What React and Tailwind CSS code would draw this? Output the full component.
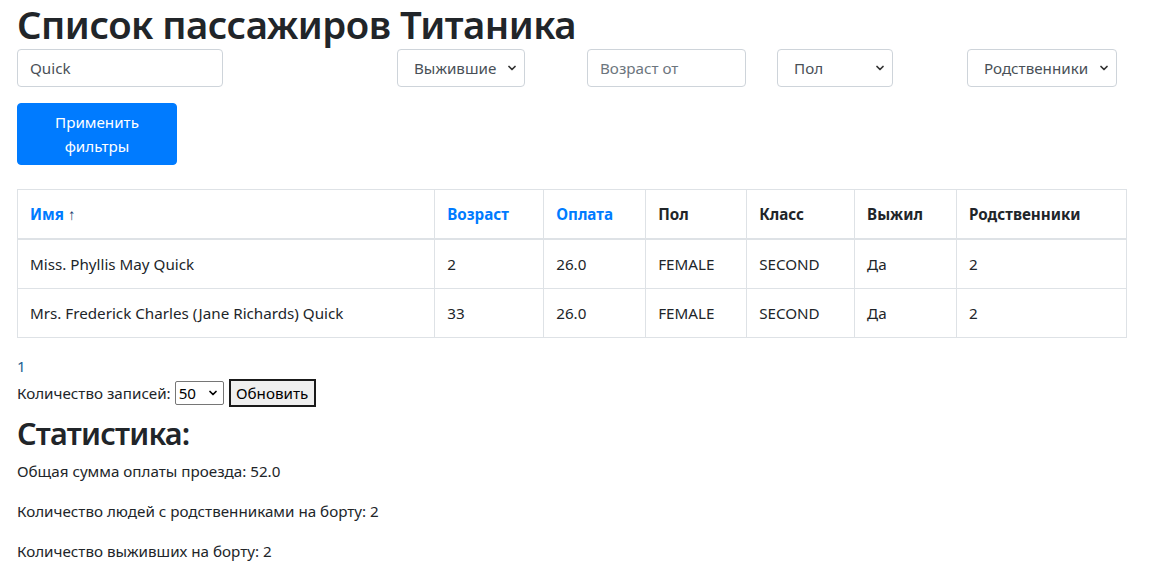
import { ChevronDown } from 'lucide-react';

const rows = [
  { name: 'Miss. Phyllis May Quick', age: '2', fare: '26.0', sex: 'FEMALE', pclass: 'SECOND', survived: 'Да', relatives: '2' },
  { name: 'Mrs. Frederick Charles (Jane Richards) Quick', age: '33', fare: '26.0', sex: 'FEMALE', pclass: 'SECOND', survived: 'Да', relatives: '2' },
];

const headers = [
  { label: 'Имя', sortable: true, arrow: true, width: 'w-[418px]' },
  { label: 'Возраст', sortable: true, width: 'w-[109px]' },
  { label: 'Оплата', sortable: true, width: 'w-[102px]' },
  { label: 'Пол', width: 'w-[101px]' },
  { label: 'Класс', width: 'w-[108px]' },
  { label: 'Выжил', width: 'w-[102px]' },
  { label: 'Родственники', width: 'w-[170px]' },
];

const Select = ({ label, className }) => (
  <div className={`relative ${className}`}>
    <select
      defaultValue=""
      className="h-[38px] w-full appearance-none rounded border border-[#ced4da] bg-white pl-4 pr-5 text-[15.2px] text-[#495057] outline-none"
    >
      <option value="">{label}</option>
    </select>
    <ChevronDown
      size={12}
      strokeWidth={3.5}
      className="pointer-events-none absolute right-[7px] top-[13px] text-[#333]"
    />
  </div>
);

export default function App() {
  return (
    <div className="min-h-[581px] bg-white px-[17px] font-['Noto_Sans',sans-serif] text-[15.2px] leading-6 text-[#212529]">
      <h1 className="h-[48px] text-[38.3px] font-semibold leading-[48px] tracking-[-0.5px]">Список пассажиров Титаника</h1>

      <div className="mt-px flex items-center">
        <input
          defaultValue="Quick"
          className="h-[38px] w-[206px] rounded border border-[#ced4da] px-3 text-[15.2px] text-[#495057] outline-none"
        />
        <Select label="Выжившие" className="ml-[174px] w-[128px]" />
        <input
          placeholder="Возраст от"
          className="ml-[62px] h-[38px] w-[159px] rounded border border-[#ced4da] px-3 text-[15.2px] text-[#495057] outline-none placeholder:text-[#6c757d]"
        />
        <Select label="Пол" className="ml-[31px] w-[116px]" />
        <Select label="Родственники" className="ml-[74px] w-[150px]" />
      </div>

      <button
        type="button"
        className="mt-4 h-[62px] w-[160px] rounded border border-[#007bff] bg-[#007bff] px-3 leading-6 text-white"
      >
        Применить
        <br />
        фильтры
      </button>

      <table className="mt-6 mb-4 w-[1110px] border-collapse border border-[#dee2e6]">
        <thead>
          <tr>
            {headers.map((h) => (
              <th
                key={h.label}
                className={`${h.width} border border-b-2 border-[#dee2e6] p-3 text-left align-bottom font-bold leading-6 ${
                  h.sortable ? 'text-[#007bff]' : 'text-[#212529]'
                }`}
              >
                {h.label}
                {h.arrow && <span className="ml-1 font-normal text-[#1a3d6e]">↑</span>}
              </th>
            ))}
          </tr>
        </thead>
        <tbody>
          {rows.map((r) => (
            <tr key={r.name}>
              {[r.name, r.age, r.fare, r.sex, r.pclass, r.survived, r.relatives].map((v, i) => (
                <td key={i} className="border border-[#dee2e6] p-3 align-top leading-6">
                  {v}
                </td>
              ))}
            </tr>
          ))}
        </tbody>
      </table>

      <div className="text-[#1b6192]">1</div>

      <div className="flex h-[30px] items-center">
        <span>Количество записей:</span>
        <div className="relative ml-[4px]">
          <select
            defaultValue="50"
            className="h-[24px] w-[49px] appearance-none rounded-[2px] border border-[#767676] bg-white pl-[3px] text-[15.2px] leading-5 text-black outline-none"
          >
            <option value="10">10</option>
            <option value="50">50</option>
            <option value="100">100</option>
          </select>
          <ChevronDown
            size={12}
            strokeWidth={3.5}
            className="pointer-events-none absolute right-[5px] top-[6px] text-black"
          />
        </div>
        <button
          type="button"
          className="ml-[5px] h-[28px] w-[87px] border-2 border-[#1a1a1a] bg-[#efefef] text-[15.2px] leading-5 text-black"
        >
          Обновить
        </button>
      </div>

      <h2 className="mt-[6px] mb-[7px] text-[30.6px] font-semibold leading-[38px] tracking-[-0.8px]">Статистика:</h2>
      <p className="mb-4">Общая сумма оплаты проезда: 52.0</p>
      <p className="mb-4">Количество людей с родственниками на борту: 2</p>
      <p className="mb-4">Количество выживших на борту: 2</p>
    </div>
  );
}
